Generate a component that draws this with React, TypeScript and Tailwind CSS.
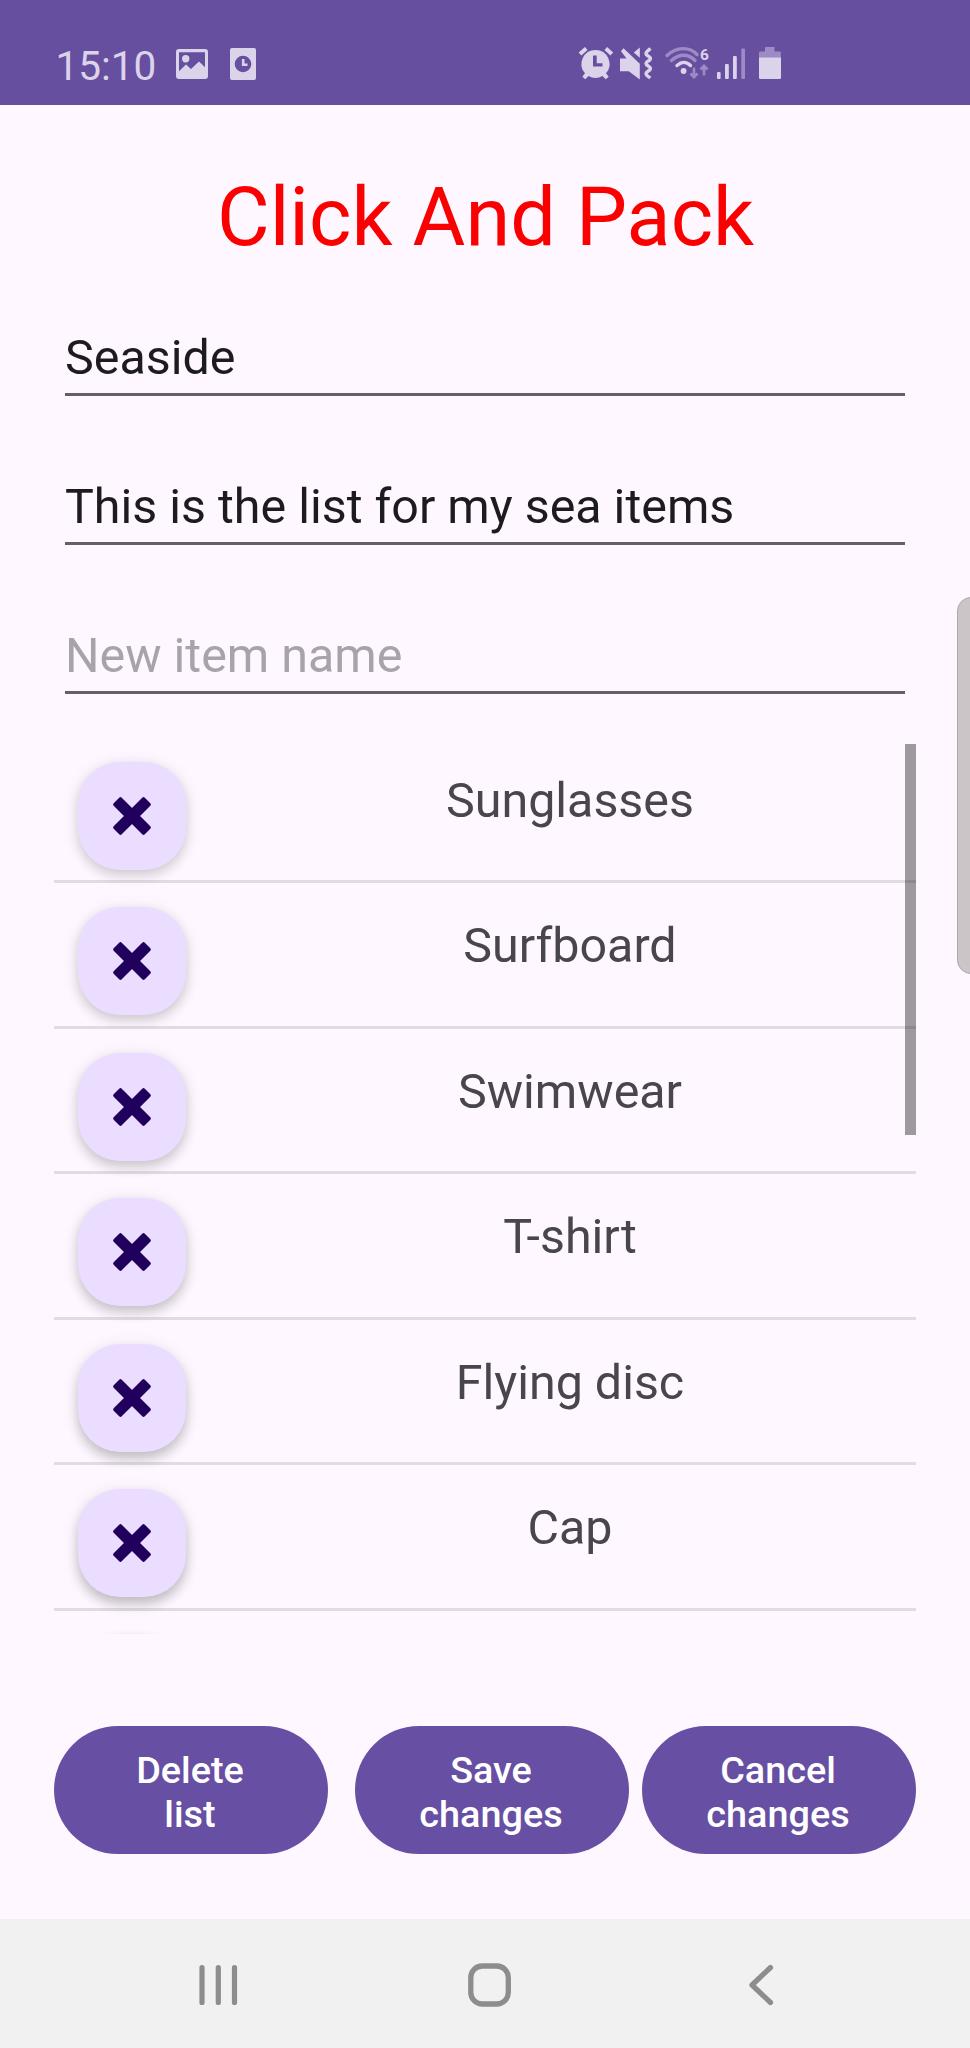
const items = ["Sunglasses", "Surfboard", "Swimwear", "T-shirt", "Flying disc", "Cap", ""];

const shadows = [
  "shadow-[0_5px_12px_rgba(0,0,0,0.15),0_2px_18px_rgba(0,0,0,0.07)]",
  "shadow-[0_5px_12px_rgba(0,0,0,0.16),0_2px_18px_rgba(0,0,0,0.07)]",
  "shadow-[0_6px_12px_rgba(0,0,0,0.17),0_2px_18px_rgba(0,0,0,0.07)]",
  "shadow-[0_6px_12px_rgba(0,0,0,0.19),0_2px_18px_rgba(0,0,0,0.07)]",
  "shadow-[0_7px_12px_rgba(0,0,0,0.20),0_2px_18px_rgba(0,0,0,0.07)]",
  "shadow-[0_7px_12px_rgba(0,0,0,0.21),0_2px_18px_rgba(0,0,0,0.07)]",
  "shadow-[0_7px_9px_rgba(0,0,0,0.21),0_0px_6px_rgba(0,0,0,0.10)]",
];

function StatusBar() {
  return (
    <header className="flex h-[105px] shrink-0 items-start bg-[#674fa0] pt-[41px] pl-[55.500px] text-[#dbd3ea]">
      <span className="mt-px w-[116.500px] text-[40.500px] leading-[48px]">15:10</span>
      <svg width="100" height="48" viewBox="172 41 100 48" fill="currentColor">
        <path
          fillRule="evenodd"
          d="M179 49h26a3 3 0 0 1 3 3v24a3 3 0 0 1-3 3h-26a3 3 0 0 1-3-3V52a3 3 0 0 1 3-3Zm0 3.200v19l7-6.700 5 4.600 8-7.600 6 5.800V52.200Z"
        />
        <circle cx="185.700" cy="58.700" r="3.700" />
        <path
          fillRule="evenodd"
          d="M232 48h22a2 2 0 0 1 2 2v28a2 2 0 0 1-2 2h-22a2 2 0 0 1-2-2V50a2 2 0 0 1 2-2Zm11 7.700a8.300 8.300 0 1 0 0 16.600 8.300 8.300 0 0 0 0-16.600Z"
        />
        <path d="M243.200 59v5.700h4.300" fill="none" stroke="currentColor" strokeWidth="2.600" />
      </svg>
      <svg className="ml-[304px]" width="210" height="48" viewBox="576 41 210 48" fill="currentColor">
        <path
          fillRule="evenodd"
          d="M595.500 50a14 14 0 0 1 10.500 23.300l2.700 3.500-3 2.500-3.200-3.400a14 14 0 0 1-14 0l-3.200 3.400-3-2.500 2.700-3.500A14 14 0 0 1 595.500 50Zm-2.500 5.500v11h9.500v-3.200h-5.800v-7.800Z"
        />
        <path d="m580 54 6.200-5.400M605.800 48.600l6 5.400" stroke="currentColor" strokeWidth="4" />
        <path d="M620 58.500h6.500l-5.500-7.200 2.500-3 16.300 15.500v15.800l-11-8.300h-8.800Z" />
        <path d="M639.800 47.500v10.300l-6-5.300Z" />
        <path
          d="M650.500 48.500c-2 1.500-4.500 3.200-4.500 5.200s4.500 2.500 4.500 4.800-4.500 2.700-4.500 5 4.500 2.700 4.500 5-4.500 2.600-4.500 5 2.500 3 4.300 4.500"
          fill="none"
          stroke="currentColor"
          strokeWidth="3.400"
        />
        <g fill="none" strokeLinecap="round" strokeWidth="3.400">
          <path d="M667 55.500c9.500-9 22.500-9 30-1M671.500 60.500c7.500-7 17-7 23.500 0" stroke="#9d8bc5" />
          <path d="M677 65.500c4.500-4 9.500-4 13.500 0" stroke="currentColor" />
        </g>
        <circle cx="683.600" cy="71" r="2.900" />
        <text x="700" y="59.500" fontSize="15.500" fontWeight="700" fontFamily="Roboto, sans-serif">
          6
        </text>
        <path
          d="M694 67.500v9M690.500 73.500l3.500 3.700 3.500-3.700M704 75.500v-9M700.500 69.500l3.500-3.700 3.500 3.700"
          fill="none"
          stroke="#9d8bc5"
          strokeWidth="2.600"
        />
        <rect x="717" y="72" width="3.600" height="7" rx="1" />
        <rect x="725" y="64" width="3.800" height="15" rx="1" />
        <rect x="733" y="56" width="3.800" height="23" rx="1" />
        <rect x="741.300" y="48.500" width="3.700" height="30.500" rx="1" fill="#9d8bc5" />
        <path d="M759 58v-5.500q0-1 1-1h5v-4.500h9.500v4.500h5q1.300 0 1.300 1v5.500Z" fill="#9d8bc5" />
        <path d="M759 57.500h22v20.300q0 1.200-1.200 1.200h-19.600q-1.200 0-1.200-1.200Z" />
      </svg>
    </header>
  );
}

function Field({ text, hint = false }: { text: string; hint?: boolean }) {
  return (
    <div className="flex h-[149px] items-end border-b-[3px] border-[#645f69] pb-[7px]">
      <span
        className={
          hint ? "text-[48.400px] leading-[56px] text-[#a8a3aa]" : "text-[48.400px] leading-[56px] text-[#1d1b20]"
        }
      >
        {text}
      </span>
    </div>
  );
}

function ItemRow({ name, shadow }: { name: string; shadow: string }) {
  return (
    <li className="flex h-[145.500px] items-start border-b-[3px] border-[#e2dbe4] pl-6">
      <button
        aria-label="Remove item"
        className={`mt-[24px] flex size-[108px] shrink-0 items-center justify-center rounded-[42px] bg-[#eaddff] ${shadow}`}
      >
        <svg width="44" height="44" viewBox="-22 -22 44 44" fill="#21005d">
          <rect x="-22" y="-5.700" width="44" height="11.400" rx="1.800" transform="rotate(45)" />
          <rect x="-22" y="-5.700" width="44" height="11.400" rx="1.800" transform="rotate(-45)" />
        </svg>
      </button>
      <span className="mt-[35px] ml-[38px] flex-1 text-center text-[48.400px] leading-[56px] text-[#49454f]">
        {name}
      </span>
    </li>
  );
}

function ActionButton({ top, bottom }: { top: string; bottom: string }) {
  return (
    <button className="h-32 w-[274px] rounded-full bg-[#674fa3] pt-[3px] pr-[2px] text-[37.800px] leading-[44px] font-medium text-white">
      {top}
      <br />
      {bottom}
    </button>
  );
}

export default function App() {
  return (
    <div className="relative flex h-[2048px] w-[970px] flex-col overflow-hidden bg-[#fef7ff] font-['Roboto',sans-serif]">
      <StatusBar />
      <h1 className="mt-[65px] h-[96px] pl-px text-center text-[81px] leading-[96px] text-[#fb0000]">Click And Pack</h1>
      <section className="-mt-[19px] ml-[65px] w-[840px]">
        <Field text="Seaside" />
        <Field text="This is the list for my sea items" />
        <Field text="New item name" hint />
      </section>
      <section className="relative mt-[50px] ml-[54px] h-[890px] w-[862px] overflow-hidden">
        <ul className="-mt-[6.500px]">
          {items.map((name, i) => (
            <ItemRow key={i} name={name} shadow={shadows[i]} />
          ))}
        </ul>
        <div className="absolute top-0 right-0 h-[391px] w-[11px] bg-black/38" />
      </section>
      <div className="mt-[92px] ml-[54px] flex">
        <ActionButton top="Delete" bottom="list" />
        <div className="ml-[27px] flex gap-[13px]">
          <ActionButton top="Save" bottom="changes" />
          <ActionButton top="Cancel" bottom="changes" />
        </div>
      </div>
      <nav className="mt-auto flex h-[129px] items-center bg-[#f1f1f1] pt-[2px]">
        <svg width="970" height="60" viewBox="0 1955 970 60" fill="none" stroke="#8d8d8d" strokeLinecap="round">
          <path d="M202 1967.500v35M218.300 1967.500v35M234.500 1967.500v35" strokeWidth="5.200" />
          <rect x="470.800" y="1966" width="37.500" height="38" rx="11.500" strokeWidth="5.300" />
          <path d="M770.500 1967.500 752 1985l18.500 17.500" strokeWidth="5.200" strokeLinejoin="round" />
        </svg>
      </nav>
      <div className="absolute top-[597px] -right-2 h-[377px] w-[21px] rounded-l-[14px] border border-[#aea8ad] bg-[#cbc5c7]" />
    </div>
  );
}
